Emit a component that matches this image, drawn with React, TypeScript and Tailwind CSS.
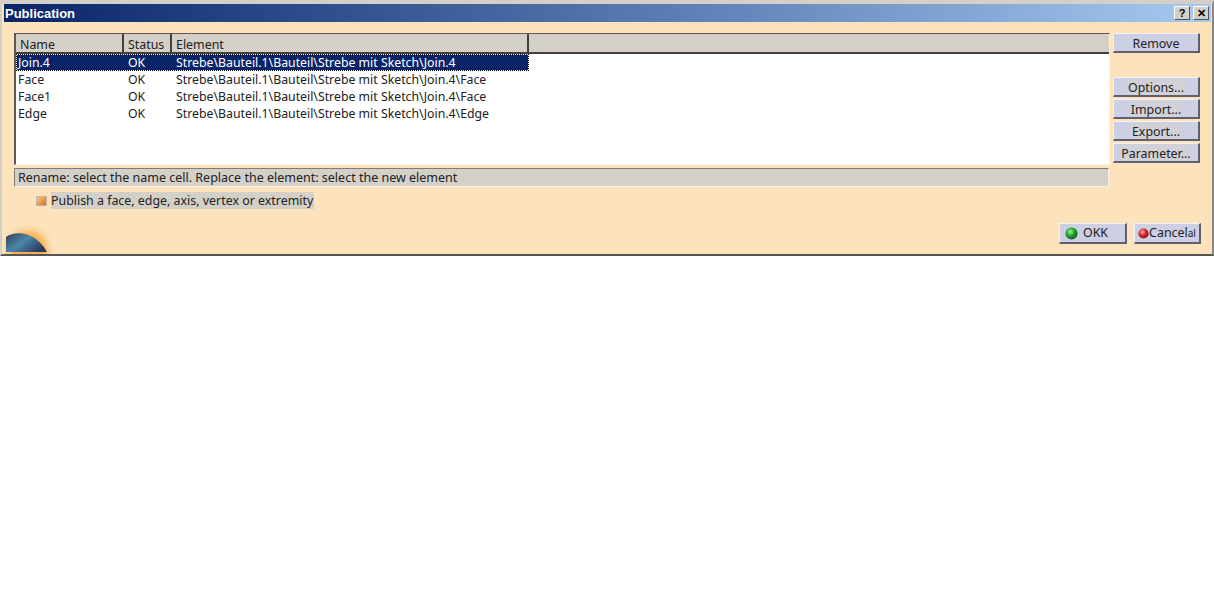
const headers = [
  { label: 'Name', width: 'w-[108px]' },
  { label: 'Status', width: 'w-[48px]' },
  { label: 'Element', width: 'w-[357px]' },
];

const rows = [
  { name: 'Join.4', status: 'OK', element: 'Strebe\\Bauteil.1\\Bauteil\\Strebe mit Sketch\\Join.4' },
  { name: 'Face', status: 'OK', element: 'Strebe\\Bauteil.1\\Bauteil\\Strebe mit Sketch\\Join.4\\Face' },
  { name: 'Face1', status: 'OK', element: 'Strebe\\Bauteil.1\\Bauteil\\Strebe mit Sketch\\Join.4\\Face' },
  { name: 'Edge', status: 'OK', element: 'Strebe\\Bauteil.1\\Bauteil\\Strebe mit Sketch\\Join.4\\Edge' },
];

const bevel = 'border-t border-l border-r-2 border-b-2 border-t-[#f4f2f8] border-l-[#f4f2f8] border-r-[#5f5f70] border-b-[#5f5f70]';
const winBevel = 'border-t border-l border-r border-b border-t-white border-l-white border-r-[#555] border-b-[#555]';

function SideButton({ label, tinted = true, className = '' }: { label: string; tinted?: boolean; className?: string }) {
  return (
    <button className={`flex h-[20px] w-[87px] items-center justify-center bg-[#cdcfe4] text-[#222] ${bevel} ${className}`}>
      <span className={`flex h-[16px] items-center px-[1px] pt-[4px] ${tinted ? 'bg-[#d2d1d8]' : ''}`}>{label}</span>
    </button>
  );
}

function Ball({ light, mid, dark, size }: { light: string; mid: string; dark: string; size: number }) {
  const id = `ball-${mid.slice(1)}`;
  return (
    <svg width={size} height={size} viewBox="0 0 14 14" className="shrink-0">
      <defs>
        <radialGradient id={id} cx="0.4" cy="0.35" r="0.7">
          <stop offset="0" stopColor={light} />
          <stop offset="0.5" stopColor={mid} />
          <stop offset="1" stopColor={dark} />
        </radialGradient>
      </defs>
      <circle cx="7" cy="7" r="6.5" fill={`url(#${id})`} />
    </svg>
  );
}

function SunLogo() {
  return (
    <svg width="50" height="34" viewBox="0 0 50 34" className="shrink-0">
      <defs>
        <radialGradient id="glow" cx="24" cy="30" r="26" gradientUnits="userSpaceOnUse">
          <stop offset="0.55" stopColor="#f7ae4c" />
          <stop offset="0.8" stopColor="#fbd39a" />
          <stop offset="1" stopColor="#fde3bc" />
        </radialGradient>
        <linearGradient id="planet" x1="0" y1="0" x2="1" y2="0.6">
          <stop offset="0" stopColor="#333f5c" />
          <stop offset="0.5" stopColor="#4a86aa" />
          <stop offset="1" stopColor="#2c3a5c" />
        </linearGradient>
      </defs>
      <rect width="50" height="34" fill="url(#glow)" />
      <path d="M2 32 V17 C12 10 32 12 43 32 Z" fill="url(#planet)" />
    </svg>
  );
}

export default function App() {
  return (
    <div className="min-h-[600px] w-[1214px] bg-white font-['Noto_Sans',sans-serif] text-[12.4px] leading-none text-[#222]">
      <div className="flex h-[256px] flex-col border-2 border-t-4 border-[#d4d0c8] border-b-[#555] border-r-[#888] bg-[#fde3bc] pl-[2px] pr-[1px]">
        <div className="flex h-[18px] shrink-0 items-center justify-between bg-gradient-to-r from-[#0a246a] to-[#a6caf0] pl-[1px] pr-[2px]">
          <span className="font-['Liberation_Sans',sans-serif] text-[13px] font-bold text-white">Publication</span>
          <div className="flex gap-[3px]">
            <span className={`flex h-[14px] w-[16px] items-center justify-center bg-[#d4d0c8] font-['Liberation_Sans',sans-serif] text-[11px] font-bold text-black ${winBevel}`}>?</span>
            <span className={`flex h-[14px] w-[16px] items-center justify-center bg-[#d4d0c8] font-['Liberation_Sans',sans-serif] text-[11px] font-bold text-black ${winBevel}`}>✕</span>
          </div>
        </div>

        <div className="flex flex-1 flex-col">
          <div className="flex pl-[10px] pt-[11px]">
            <div className="flex flex-col">
              <div className="h-[132px] w-[1096px] border-t border-l-2 border-r border-b border-t-[#5a5a5a] border-l-[#5a5a5a] border-r-[#f4f2f0] border-b-[#f4f2f0] bg-white">
                <div className="flex h-[20px] border-b-2 border-[#404040] bg-[#d4d0c8]">
                  {headers.map((h) => (
                    <div key={h.label} className={`flex items-center border-r-2 border-[#404040] pl-[4px] pt-[5px] ${h.width}`}>
                      {h.label}
                    </div>
                  ))}
                </div>
                {rows.map((row, i) => (
                  <div
                    key={row.name}
                    className={`flex h-[17px] w-[513px] items-center border border-dotted pt-[2px] text-[12.3px] ${i === 0 ? 'border-black bg-[#0a246a] bg-clip-padding text-white' : 'border-transparent'}`}
                  >
                    <span className="w-[107px] pl-[1px]">{row.name}</span>
                    <span className="w-[48px] pl-[4px]">{row.status}</span>
                    <span className="whitespace-nowrap pl-[4px]">{row.element}</span>
                  </div>
                ))}
              </div>
              <div className="mt-[3px] flex h-[19px] w-[1095px] items-center border border-[#7c7c7c] border-b-[#f4f2f0] border-r-[#f4f2f0] bg-[#d4d0c8] pl-[3px] pt-[2px] text-[12.5px]">
                Rename: select the name cell. Replace the element: select the new element
              </div>
            </div>
            <div className="ml-[3px] flex flex-col">
              <SideButton label="Remove" tinted={false} />
              <SideButton label="Options..." className="mt-[24px]" />
              <SideButton label="Import..." className="mt-[2px]" />
              <SideButton label="Export..." className="mt-[2px]" />
              <SideButton label="Parameter..." className="mt-[2px]" />
            </div>
          </div>

          <div className="mt-[5px] flex items-center pl-[32px]">
            <span className="h-[10px] w-[11px] border border-[#b9b5ad] bg-gradient-to-br from-[#f9c978] to-[#d9701c]" />
            <span className="ml-[4px] flex h-[17px] items-center bg-[#d4d0c8] pr-[1px] pt-[2px]">
              Publish a face, edge, axis, vertex or extremity
            </span>
          </div>

          <div className="mt-auto flex items-end justify-between">
            <SunLogo />
            <div className="mb-[10px] mr-[10px] flex gap-[7px]">
              <button className={`flex h-[21px] w-[68px] items-center gap-[5px] bg-[#cdcfe4] pl-[5px] ${bevel}`}>
                <Ball light="#9ff09f" mid="#1fa02f" dark="#0a5a18" size={13} />
                OKK
              </button>
              <button className={`flex h-[21px] w-[67px] items-center justify-center bg-[#cdcfe4] ${bevel}`}>
                <Ball light="#ffb0b0" mid="#e02020" dark="#801010" size={11} />
                <span>Cancel</span>
                <span className="text-[10px]">al</span>
              </button>
            </div>
          </div>
        </div>
      </div>
    </div>
  );
}
